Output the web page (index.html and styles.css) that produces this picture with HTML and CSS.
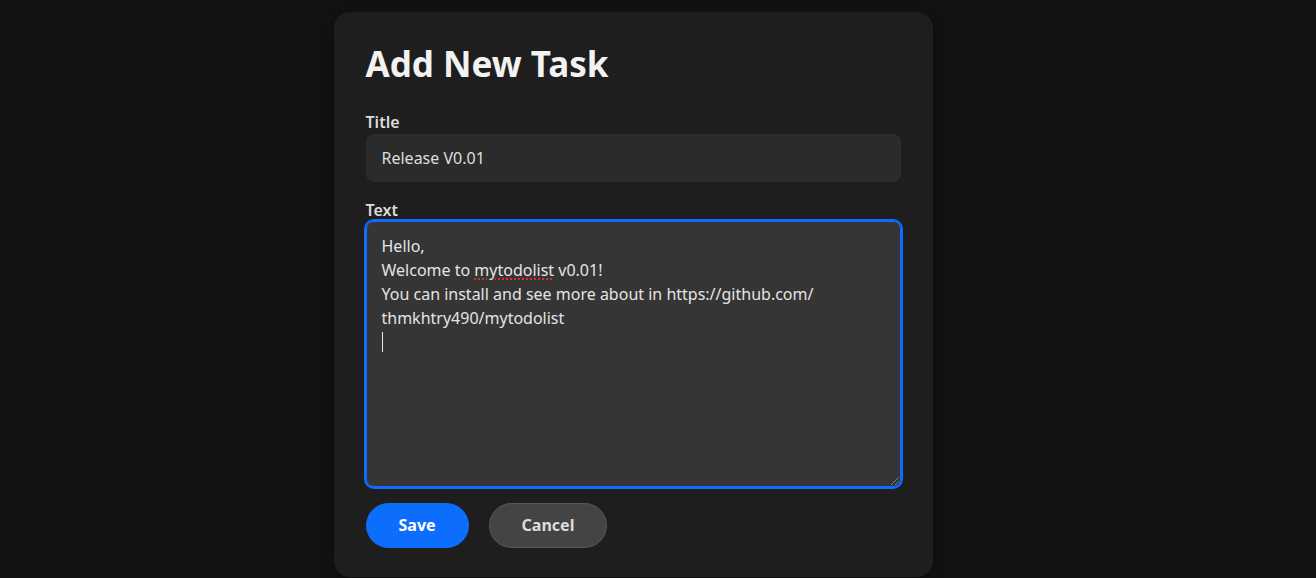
FILE: index.html
```html
<!DOCTYPE html>
<html lang="en">
<head>
<meta charset="utf-8">
<title>Add New Task</title>
<link rel="stylesheet" href="styles.css">
</head>
<body>
<main class="page">
  <section class="card">
    <h1 class="card-title">Add New Task</h1>
    <div class="field">
      <label class="field-label" for="title">Title</label>
      <div class="input" id="title">Release V0.01</div>
    </div>
    <div class="field">
      <label class="field-label">Text</label>
      <div class="textarea" role="textbox">
        <div class="line">Hello,</div>
        <div class="line">Welcome to <span class="misspelled">mytodolist</span> v0.01!</div>
        <div class="line">You can install and see more about in https://github.com/</div>
        <div class="line">thmkhtry490/mytodolist</div>
        <div class="line"><span class="caret"></span></div>
        <span class="grip"></span>
      </div>
    </div>
    <div class="actions">
      <button class="btn btn-primary" type="button">Save</button>
      <button class="btn btn-secondary" type="button">Cancel</button>
    </div>
  </section>
</main>
</body>
</html>
```

FILE: styles.css
```css
* { box-sizing: border-box; }

html, body {
  margin: 0;
  height: 100%;
  background: #121212;
}

body {
  font-family: "Noto Sans", "Open Sans", sans-serif;
  color: #e0e0e0;
  overflow: hidden;
}

.page {
  display: flex;
  justify-content: center;
  padding: 12px 50px 0 0;
}

.card {
  width: 599px;
  background: #1e1e1e;
  border-radius: 16px;
  padding: 31px 32px 29px;
  box-shadow: 0 4px 16px rgba(0, 0, 0, 0.35);
}

.card-title {
  margin: 0 0 25px;
  font-size: 35px;
  line-height: 42px;
  font-weight: 700;
  color: #f2f2f2;
}

.field {
  margin-bottom: 16px;
}

.field-label {
  display: block;
  font-size: 16px;
  font-weight: 600;
  line-height: 24px;
  color: #dcdcdc;
}

.input {
  height: 48px;
  padding: 12px 16px;
  font-size: 16px;
  line-height: 24px;
  background: #2b2b2b;
  border-radius: 8px;
  color: #dedede;
}

.textarea {
  position: relative;
  height: 266px;
  margin-top: -1px;
  padding: 12px 15px;
  font-size: 16px;
  line-height: 24px;
  background: #353535;
  border: 1px solid #0d6efd;
  outline: 2px solid #0d6efd;
  border-radius: 8px;
  color: #e4e4e4;
}

.line {
  height: 24px;
  white-space: pre;
}

.misspelled {
  text-decoration: underline dotted #e02a2a;
  text-decoration-thickness: 2px;
  text-underline-offset: 2px;
}

.caret {
  display: inline-block;
  width: 1px;
  height: 20px;
  margin-top: 2px;
  background: #e8e8e8;
  vertical-align: top;
}

.grip {
  position: absolute;
  right: 1px;
  bottom: 1px;
  width: 10px;
  height: 10px;
  background: repeating-linear-gradient(135deg, transparent 0 2px, #8a8a8a 2px 3px);
  clip-path: polygon(100% 0, 100% 100%, 0 100%);
  opacity: 0.8;
}

.actions {
  display: flex;
  gap: 20px;
}

.btn {
  font-family: inherit;
  font-size: 16px;
  font-weight: 700;
  line-height: 23px;
  padding: 10px 32px;
  border-radius: 999px;
  border: 1px solid transparent;
  cursor: pointer;
}

.btn-primary {
  background: #0d6efd;
  border-color: #0d6efd;
  color: #ffffff;
}

.btn-secondary {
  background: #444444;
  border-color: #575757;
  color: #dddddd;
}
```
